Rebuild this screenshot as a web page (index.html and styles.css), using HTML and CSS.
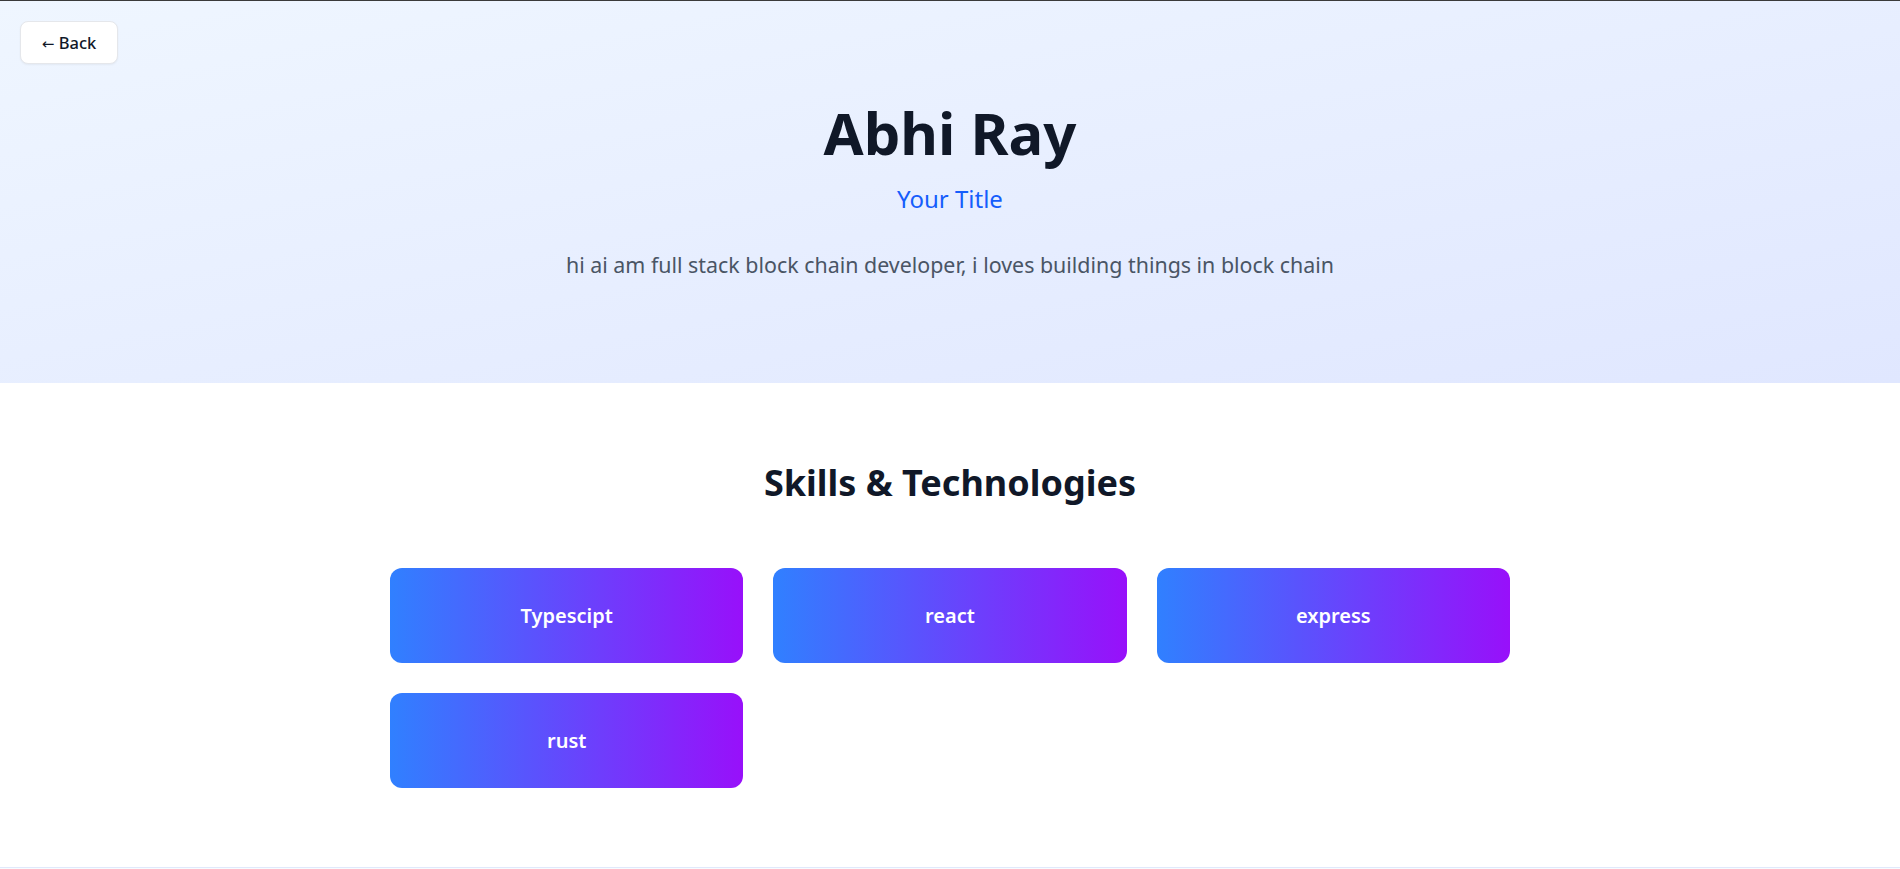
FILE: index.html
```html
<!DOCTYPE html>
<html lang="en">
<head>
<meta charset="utf-8">
<title>Abhi Ray</title>
<link rel="stylesheet" href="styles.css">
</head>
<body>
  <header class="hero">
    <div class="hero-nav">
      <button class="back-btn"><span class="back-arrow">←</span> Back</button>
    </div>
    <div class="hero-body">
      <h1 class="hero-name">Abhi Ray</h1>
      <p class="hero-title">Your Title</p>
      <p class="hero-bio">hi ai am full stack block chain developer, i loves building things in block chain</p>
    </div>
  </header>
  <section class="skills">
    <h2 class="skills-heading">Skills &amp; Technologies</h2>
    <div class="skills-grid">
      <div class="skill-card">Typescipt</div>
      <div class="skill-card">react</div>
      <div class="skill-card">express</div>
      <div class="skill-card">rust</div>
    </div>
  </section>
  <section class="next-section"></section>
</body>
</html>
```

FILE: styles.css
```css
* { box-sizing: border-box; }

html, body {
  margin: 0;
  padding: 0;
}

body {
  font-family: "Noto Sans", "Open Sans", sans-serif;
  background: #ffffff;
  border-top: 1px solid #3a3a3a;
  color: #101828;
}

.hero {
  background: linear-gradient(to bottom right, #eff6ff, #e0e7ff);
  height: 382px;
  padding: 20px 20px 0 20px;
}

.hero-nav {
  display: flex;
  height: 43px;
}

.back-btn {
  font-family: inherit;
  font-size: 16.5px;
  font-weight: 500;
  color: #101828;
  background: #ffffff;
  border: 1px solid #e5e7eb;
  border-radius: 8px;
  padding: 0 14px;
  height: 43px;
  width: 98px;
  box-shadow: 0 1px 2px rgba(0,0,0,0.05);
}

.back-arrow {
  font-family: "DejaVu Sans", sans-serif;
  font-size: 15px;
}

.hero-body {
  display: flex;
  flex-direction: column;
  align-items: center;
  text-align: center;
  margin-top: 39px;
}

.hero-name {
  margin: 0;
  font-size: 58px;
  line-height: 60px;
  font-weight: 700;
  color: #101828;
}

.hero-title {
  margin: 20px 0 0 0;
  font-size: 24px;
  line-height: 32px;
  color: #155dfc;
}

.hero-bio {
  margin: 36px 0 0 0;
  font-size: 21.4px;
  line-height: 28px;
  color: #4a5565;
}

.skills {
  padding: 80px 16px 79px 16px;
  display: flex;
  flex-direction: column;
  align-items: center;
}

.skills-heading {
  margin: 0 0 65px 0;
  font-size: 36px;
  line-height: 40px;
  font-weight: 700;
  color: #101828;
}

.skills-grid {
  width: 1120px;
  display: grid;
  grid-template-columns: repeat(3, 1fr);
  gap: 30px;
}

.skill-card {
  height: 95px;
  border-radius: 12px;
  background: linear-gradient(to right, #3080ff, #9810fa);
  color: #ffffff;
  font-size: 20px;
  font-weight: 600;
  display: flex;
  align-items: center;
  justify-content: center;
}

.next-section {
  border-top: 1px solid #e0e9fb;
  background: #f8fbff;
  height: 200px;
}
```
